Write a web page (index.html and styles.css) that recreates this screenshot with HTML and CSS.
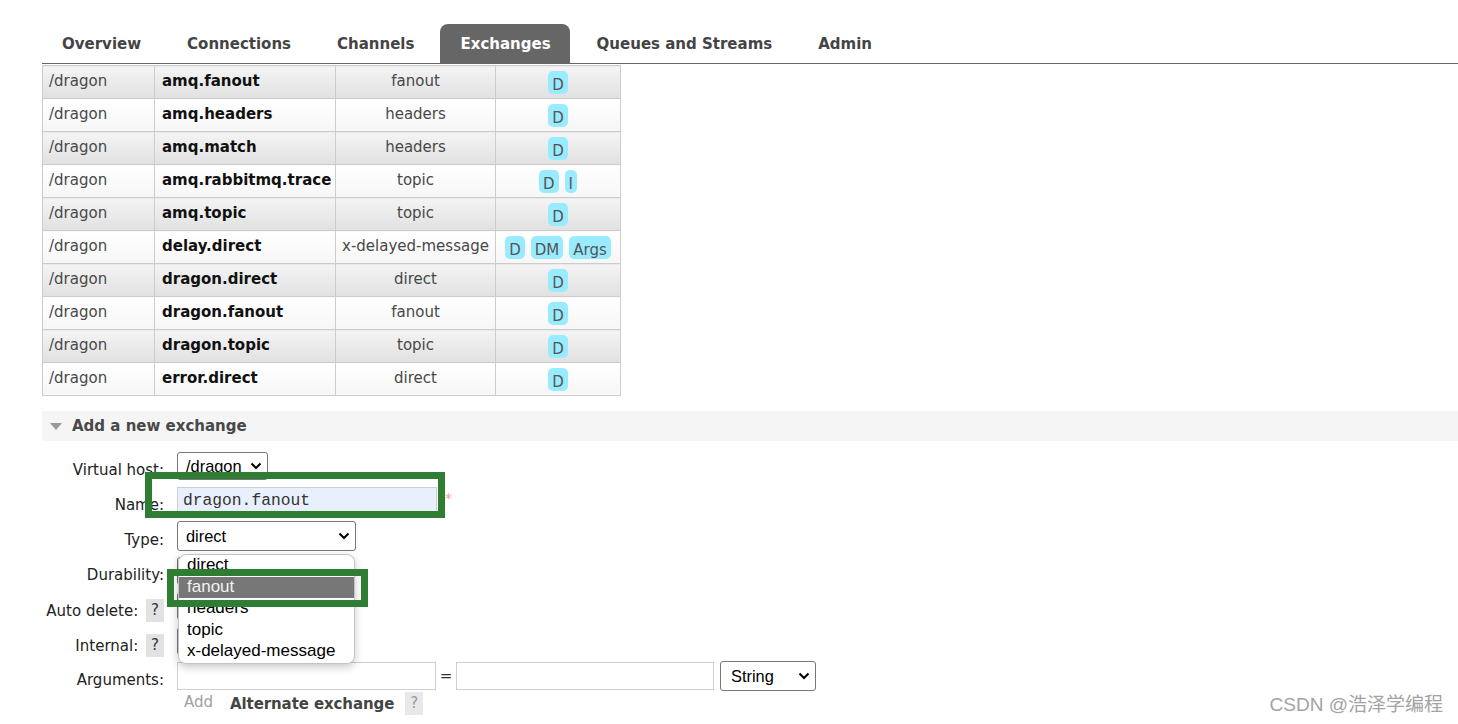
FILE: index.html
```html
<!DOCTYPE html>
<html>
<head>
<meta charset="utf-8">
<title>Exchanges</title>
<link rel="stylesheet" href="styles.css">
</head>
<body>
<div class="page">
  <nav class="tabs">
    <a class="tab">Overview</a>
    <a class="tab">Connections</a>
    <a class="tab">Channels</a>
    <a class="tab active">Exchanges</a>
    <a class="tab">Queues and Streams</a>
    <a class="tab">Admin</a>
  </nav>

  <table class="list">
    <colgroup>
      <col class="c1"><col class="c2"><col class="c3"><col class="c4">
    </colgroup>
    <tbody>
      <tr><td>/dragon</td><td class="name">amq.fanout</td><td class="ctr">fanout</td><td class="ctr"><span class="badge">D</span></td></tr>
      <tr><td>/dragon</td><td class="name">amq.headers</td><td class="ctr">headers</td><td class="ctr"><span class="badge">D</span></td></tr>
      <tr><td>/dragon</td><td class="name">amq.match</td><td class="ctr">headers</td><td class="ctr"><span class="badge">D</span></td></tr>
      <tr><td>/dragon</td><td class="name">amq.rabbitmq.trace</td><td class="ctr">topic</td><td class="ctr"><span class="badge">D</span><span class="badge">I</span></td></tr>
      <tr><td>/dragon</td><td class="name">amq.topic</td><td class="ctr">topic</td><td class="ctr"><span class="badge">D</span></td></tr>
      <tr><td>/dragon</td><td class="name">delay.direct</td><td class="ctr">x-delayed-message</td><td class="ctr"><span class="badge">D</span><span class="badge">DM</span><span class="badge">Args</span></td></tr>
      <tr><td>/dragon</td><td class="name">dragon.direct</td><td class="ctr">direct</td><td class="ctr"><span class="badge">D</span></td></tr>
      <tr><td>/dragon</td><td class="name">dragon.fanout</td><td class="ctr">fanout</td><td class="ctr"><span class="badge">D</span></td></tr>
      <tr><td>/dragon</td><td class="name">dragon.topic</td><td class="ctr">topic</td><td class="ctr"><span class="badge">D</span></td></tr>
      <tr><td>/dragon</td><td class="name">error.direct</td><td class="ctr">direct</td><td class="ctr"><span class="badge">D</span></td></tr>
    </tbody>
  </table>

  <section class="section">
    <h2 class="section-head"><span class="tri"></span>Add a new exchange</h2>
    <div class="form">
      <div class="row">
        <div class="label">Virtual host:</div>
        <div class="ctl">
          <div class="select vhost"><span>/dragon</span><svg class="chev" width="12" height="8" viewBox="0 0 12 8"><path d="M1.5 1.5 L6 6 L10.5 1.5" fill="none" stroke="#000" stroke-width="2"/></svg></div>
        </div>
      </div>
      <div class="row">
        <div class="label">Name:</div>
        <div class="ctl">
          <div class="input name-in">dragon.fanout</div><span class="req">*</span>
        </div>
      </div>
      <div class="row">
        <div class="label">Type:</div>
        <div class="ctl">
          <div class="type-wrap">
            <div class="select type"><span>direct</span><svg class="chev" width="12" height="8" viewBox="0 0 12 8"><path d="M1.5 1.5 L6 6 L10.5 1.5" fill="none" stroke="#000" stroke-width="2"/></svg></div>
            <ul class="popup">
              <li>direct</li>
              <li class="sel">fanout</li>
              <li>headers</li>
              <li>topic</li>
              <li>x-delayed-message</li>
            </ul>
          </div>
        </div>
      </div>
      <div class="row">
        <div class="label">Durability:</div>
        <div class="ctl"><div class="select small"></div></div>
      </div>
      <div class="row">
        <div class="label">Auto delete: <span class="help">?</span></div>
        <div class="ctl"><div class="select small"></div></div>
      </div>
      <div class="row">
        <div class="label">Internal: <span class="help">?</span></div>
        <div class="ctl"><div class="select small"></div></div>
      </div>
      <div class="row">
        <div class="label">Arguments:</div>
        <div class="ctl args">
          <div class="input arg"></div>
          <span class="eq">=</span>
          <div class="input arg2"></div>
          <div class="select str"><span>String</span><svg class="chev" width="12" height="8" viewBox="0 0 12 8"><path d="M1.5 1.5 L6 6 L10.5 1.5" fill="none" stroke="#000" stroke-width="2"/></svg></div>
        </div>
      </div>
      <div class="addrow">
        <span class="add">Add</span>
        <span class="alt">Alternate exchange</span>
        <span class="help light">?</span>
      </div>
    </div>
  </section>
</div>

<div class="mark mark-name"></div>
<div class="mark mark-opt"></div>
<div class="watermark">CSDN @浩泽学编程</div>
</body>
</html>
```

FILE: styles.css
```css
html, body {
  margin: 0;
  padding: 0;
  background: #fff;
  overflow: hidden;
}
body {
  font-family: "DejaVu Sans", Verdana, sans-serif;
  font-size: 15px;
  color: #484848;
  width: 1458px;
  height: 724px;
  position: relative;
}
.page {
  padding-left: 42px;
}

/* tabs */
.tabs {
  display: flex;
  gap: 7px;
  margin-top: 24px;
  height: 39px;
  border-bottom: 1px solid #666;
}
.tab {
  display: block;
  padding: 1px 19px 0 20px;
  line-height: 38px;
  font-size: 15px;
  font-weight: bold;
  color: #444;
}
.tab.active {
  background: #666;
  color: #fff;
  border-radius: 8px 8px 0 0;
}

/* table */
.list {
  border-collapse: collapse;
  margin-top: 1px;
  width: 578px;
  table-layout: fixed;
}
.list col.c1 { width: 112px; }
.list col.c2 { width: 181px; }
.list col.c3 { width: 160px; }
.list col.c4 { width: 125px; }
.list tr { height: 33px; }
.list td {
  border: 1px solid #ccc;
  padding: 0 6px 3px 6px;
  vertical-align: middle;
  white-space: nowrap;
  line-height: 22px;
}
.list tr:nth-child(odd) td {
  background: linear-gradient(#f4f4f4, #e1e1e1);
}
.list tr:nth-child(even) td {
  background: linear-gradient(#ffffff, #f6f6f6);
}
.list td.name {
  font-weight: bold;
  color: #111;
  padding-left: 7px;
}
.list td.ctr {
  text-align: center;
  padding-left: 2px;
  padding-right: 2px;
}
.badge {
  display: inline-block;
  vertical-align: middle;
  height: 23px;
  box-sizing: border-box;
  padding: 5px 4px 0;
  line-height: 18px;
  margin: 3px 3px 0;
  background: #99ebff;
  border-radius: 5px;
  color: #555;
}

/* section */
.section {
  margin-top: 15px;
}
.section-head {
  margin: 0;
  height: 30px;
  line-height: 30px;
  background: #f5f5f5;
  font-size: 15px;
  font-weight: bold;
  color: #484848;
  display: flex;
  align-items: center;
  padding-left: 8px;
}
.tri {
  display: inline-block;
  width: 0;
  height: 0;
  border-left: 6.5px solid transparent;
  border-right: 6.5px solid transparent;
  border-top: 7px solid #9a9a9a;
  margin-right: 10px;
}

/* form */
.form {
  padding-top: 9px;
  color: #222;
}
.row {
  display: flex;
  align-items: flex-start;
  gap: 13px;
  height: 35px;
}
.label {
  width: 122px;
  text-align: right;
  line-height: 20px;
  padding-top: 10px;
  white-space: nowrap;
}
.ctl {
  display: flex;
  align-items: flex-start;
  padding-top: 1px;
  position: relative;
}
.help {
  display: inline-block;
  width: 18px;
  height: 23px;
  line-height: 23px;
  text-align: center;
  background: #e2e2e2;
  color: #333;
  margin-left: 3px;
  vertical-align: middle;
  position: relative;
  top: -1px;
}
.help.light {
  color: #999;
  background: #e8e8e8;
}
.select {
  box-sizing: border-box;
  border: 1px solid #767676;
  border-radius: 3px;
  background: #fff;
  font-family: "Liberation Sans", Arial, sans-serif;
  font-size: 16.4px;
  color: #000;
  display: flex;
  align-items: center;
  justify-content: space-between;
  padding: 0 5px 0 8px;
}
.select.vhost {
  width: 91px;
  height: 28px;
  margin-top: 1px;
}
.select.type {
  width: 179px;
  height: 30px;
}
.select.small {
  width: 80px;
  height: 28px;
  margin-top: 1px;
}
.select.str {
  width: 96px;
  height: 30px;
  margin-left: 6px;
  padding-left: 10px;
}
.chev {
  display: block;
}
.input {
  box-sizing: border-box;
  border: 1px solid #cfcfcf;
  background: #fff;
}
.name-in {
  width: 260px;
  height: 27px;
  margin-top: 1px;
  background: #e8f0fe;
  font-family: "Liberation Mono", "Courier New", monospace;
  font-size: 16.3px;
  color: #333;
  line-height: 25px;
  padding-left: 5px;
}
.req {
  color: #f59a9a;
  font-size: 14px;
  margin-left: 8px;
  margin-top: 4px;
}
.type-wrap {
  position: relative;
}
.popup {
  position: absolute;
  left: 1px;
  top: 33px;
  width: 177px;
  box-sizing: border-box;
  margin: 0;
  padding: 0;
  list-style: none;
  background: #fff;
  border: 1px solid #c4c4c4;
  border-radius: 8px;
  box-shadow: 0 3px 9px rgba(0, 0, 0, 0.22);
  font-family: "Liberation Sans", Arial, sans-serif;
  font-size: 17px;
  color: #000;
  z-index: 5;
  overflow: hidden;
}
.popup li {
  height: 21.6px;
  line-height: 20px;
  padding-left: 8px;
}
.popup li.sel {
  background: #777;
  color: #f2f2f2;
}
.args {
  align-items: center;
}
.arg {
  width: 259px;
  height: 28px;
}
.eq {
  width: 20px;
  text-align: center;
  color: #333;
  font-size: 15px;
}
.arg2 {
  width: 258px;
  height: 28px;
}
.addrow {
  display: flex;
  align-items: center;
  margin-left: 135px;
  margin-top: -3px;
}
.add {
  color: #a0a0a0;
  padding-left: 7px;
  position: relative;
  top: -2px;
}
.alt {
  font-weight: bold;
  color: #444;
  margin-left: 17px;
  letter-spacing: -0.1px;
}
.addrow .help {
  margin-left: 11px;
  top: 0;
}

/* annotation marks */
.mark {
  position: absolute;
  border: 7px solid #2e7d32;
  box-sizing: border-box;
  z-index: 10;
}
.mark-name {
  left: 145px;
  top: 472px;
  width: 300px;
  height: 46px;
}
.mark-opt {
  left: 167px;
  top: 569px;
  width: 201px;
  height: 38px;
}

.watermark {
  position: absolute;
  right: 15px;
  bottom: 8px;
  font-family: "Liberation Sans", "Noto Sans CJK SC", sans-serif;
  font-size: 19px;
  color: #a3a3a3;
  text-shadow: 0 0 1px rgba(255, 255, 255, 0.8);
  z-index: 11;
}
```
